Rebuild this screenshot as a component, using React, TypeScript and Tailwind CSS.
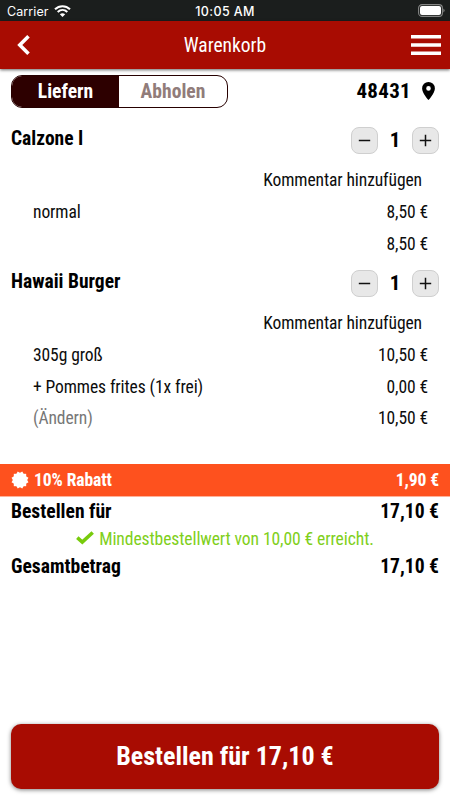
import React from "react";

const condensed = "font-['Roboto_Condensed',Roboto,sans-serif]";

type Line = { label?: string; price: string; muted?: boolean };

function StepButton({ plus }: { plus?: boolean }) {
  return (
    <button className="flex h-[27px] w-[27px] items-center justify-center rounded-[8px] border border-[#cfcfcf] bg-[#e8e8e8]">
      <svg width="13" height="13" viewBox="0 0 13 13" stroke="#111" strokeWidth="1.5">
        <path d={plus ? "M.8 6.5H12.2M6.5 .8V12.2" : "M.8 6.5H12.2"} />
      </svg>
    </button>
  );
}

function Item({ name, lines }: { name: string; lines: Line[] }) {
  return (
    <section className="mb-[1.5px]">
      <div className="flex h-[47px] items-center justify-between px-[11px]">
        <h2 className="-mt-[4px] text-[19.5px] font-bold">{name}</h2>
        <div className="flex w-[88px] items-center justify-between">
          <StepButton />
          <span className="text-[21px] font-bold">1</span>
          <StepButton plus />
        </div>
      </div>
      <div className="flex h-[31.5px] items-center justify-end pr-[28px] pt-[1px] text-[17.55px] tracking-[-0.1px] text-[#0c0c0c]">
        Kommentar hinzufügen
      </div>
      {lines.map((l, i) => (
        <div key={i} className="flex h-[31.5px] items-center justify-between pl-[33px] pr-[22px] pt-[2px] text-[17.55px] tracking-[-0.1px] text-[#0c0c0c]">
          <span className={l.muted ? "text-[#777]" : ""}>{l.label}</span>
          <span>{l.price}</span>
        </div>
      ))}
    </section>
  );
}

export default function App() {
  return (
    <div className={`flex h-[800px] w-[450px] flex-col overflow-hidden bg-white text-black ${condensed}`}>
      <div className="flex h-[21px] shrink-0 items-center bg-[#1b1e1d] px-[7px] font-[Inter,sans-serif] text-[12.5px] text-white">
        <div className="flex flex-1 items-center gap-[5px]">
          <span className="mt-[3px] tracking-[0.1px]">Carrier</span>
          <svg width="17" height="12" viewBox="0 0 17 12" fill="none" stroke="white" strokeWidth="2.1">
            <path d="M1 4.3C5.3.2 11.7.2 16 4.3M3.7 7C6.5 4.4 10.5 4.4 13.3 7" />
            <path d="M5.8 9.2C7.4 7.8 9.6 7.8 11.2 9.2L8.5 12Z" fill="white" stroke="none" />
          </svg>
        </div>
        <span className="mt-[3px] font-medium tracking-[0.4px]">10:05 AM</span>
        <div className="flex flex-1 justify-end">
          <svg width="27" height="13" viewBox="0 0 27 13" className="-mr-[2px]">
            <rect x=".6" y=".6" width="23.8" height="11.8" rx="3.5" fill="none" stroke="#858685" strokeWidth="1.1" />
            <rect x="2" y="2" width="21" height="9" rx="2" fill="white" />
            <path d="M25.4 4.5Q27.8 6.5 25.4 8.5Z" fill="#858685" />
          </svg>
        </div>
      </div>

      <header className="relative z-10 flex h-[48px] shrink-0 items-center justify-between bg-[#a80c02] pl-[17px] pr-[9px] text-white shadow-[0_1px_3px_rgba(0,0,0,0.6)]">
        <svg width="22" height="20" viewBox="0 0 22 20" fill="none" stroke="white" strokeWidth="3.6">
          <path d="M11.5 1.3L2.8 10L11.5 18.7" />
        </svg>
        <h1 className="pt-[1px] text-[19.5px]">Warenkorb</h1>
        <svg width="30" height="20" viewBox="0 0 30 20" fill="white">
          <path d="M0 0H30V3.5H0ZM0 8.2H30V11.7H0ZM0 16.4H30V19.9H0Z" />
        </svg>
      </header>

      <div className="flex h-[48px] shrink-0 items-start justify-between pl-[11px] pr-[15px] pt-[6px]">
        <div className="flex h-[33px] w-[217px] overflow-hidden rounded-[11px] border border-[#260000] text-[19.6px] font-bold">
          <div className="flex w-[107px] items-center justify-center bg-[#2d0000] text-white">Liefern</div>
          <div className="flex flex-1 items-center justify-center text-[#917c7a]">Abholen</div>
        </div>
        <div className="flex h-[33px] items-center gap-[11px]">
          <span className="text-[21px] font-bold tracking-[0.3px]">48431</span>
          <svg width="13" height="18" viewBox="0 0 13 18" className="-mt-[2px]">
            <path fillRule="evenodd" d="M6.5 0A6.4 6.4 0 0 0 .1 6.4C.1 11 6.5 18 6.5 18S12.9 11 12.9 6.4A6.4 6.4 0 0 0 6.5 0ZM6.5 4.1A2.3 2.3 0 1 1 6.5 8.7A2.3 2.3 0 0 1 6.5 4.1Z" />
          </svg>
        </div>
      </div>

      <main>
        <Item name="Calzone I" lines={[{ label: "normal", price: "8,50 €" }, { price: "8,50 €" }]} />
        <Item
          name="Hawaii Burger"
          lines={[
            { label: "305g groß", price: "10,50 €" },
            { label: "+ Pommes frites (1x frei)", price: "0,00 €" },
            { label: "(Ändern)", price: "10,50 €", muted: true },
          ]}
        />
      </main>

      <div className="mt-[29px] flex h-[33px] shrink-0 items-center border-b border-[#ffb199] bg-[#fe511e] px-[11px] text-[17.6px] font-bold tracking-[-0.1px] text-white">
        <svg width="18" height="18" viewBox="-9 -9 18 18" fill="white" className="mr-[5px]">
          {[0, 30, 60].map((a) => (
            <rect key={a} x="-6.2" y="-6.2" width="12.4" height="12.4" transform={`rotate(${a})`} />
          ))}
        </svg>
        <span className="flex-1 pt-[2px]">10% Rabatt</span>
        <span className="pt-[2px]">1,90 €</span>
      </div>
      <div className="flex h-[28px] shrink-0 items-center justify-between px-[11px] pt-[2px] text-[19.6px] font-bold">
        <span>Bestellen für</span>
        <span>17,10 €</span>
      </div>
      <div className="flex h-[27px] shrink-0 items-center justify-center text-[17.6px] tracking-[-0.1px] text-[#80cf1a]">
        <svg width="18" height="14" viewBox="0 0 18 14" fill="none" stroke="#78cb0c" strokeWidth="3.6" className="mr-[5px]">
          <path d="M1.3 6.7L6.3 11L16.7 1.5" />
        </svg>
        <span className="pt-[2px]">Mindestbestellwert von 10,00 € erreicht.</span>
      </div>
      <div className="flex h-[28px] shrink-0 items-center justify-between px-[11px] pt-[2px] text-[19.6px] font-bold">
        <span>Gesamtbetrag</span>
        <span>17,10 €</span>
      </div>

      <button className="mx-[11px] mb-[11px] mt-auto flex h-[65px] shrink-0 items-center justify-center rounded-[10px] bg-[#a80c02] text-[26px] font-bold text-white shadow-[0_1px_4px_rgba(0,0,0,0.5)]">
        Bestellen für 17,10 €
      </button>
    </div>
  );
}
